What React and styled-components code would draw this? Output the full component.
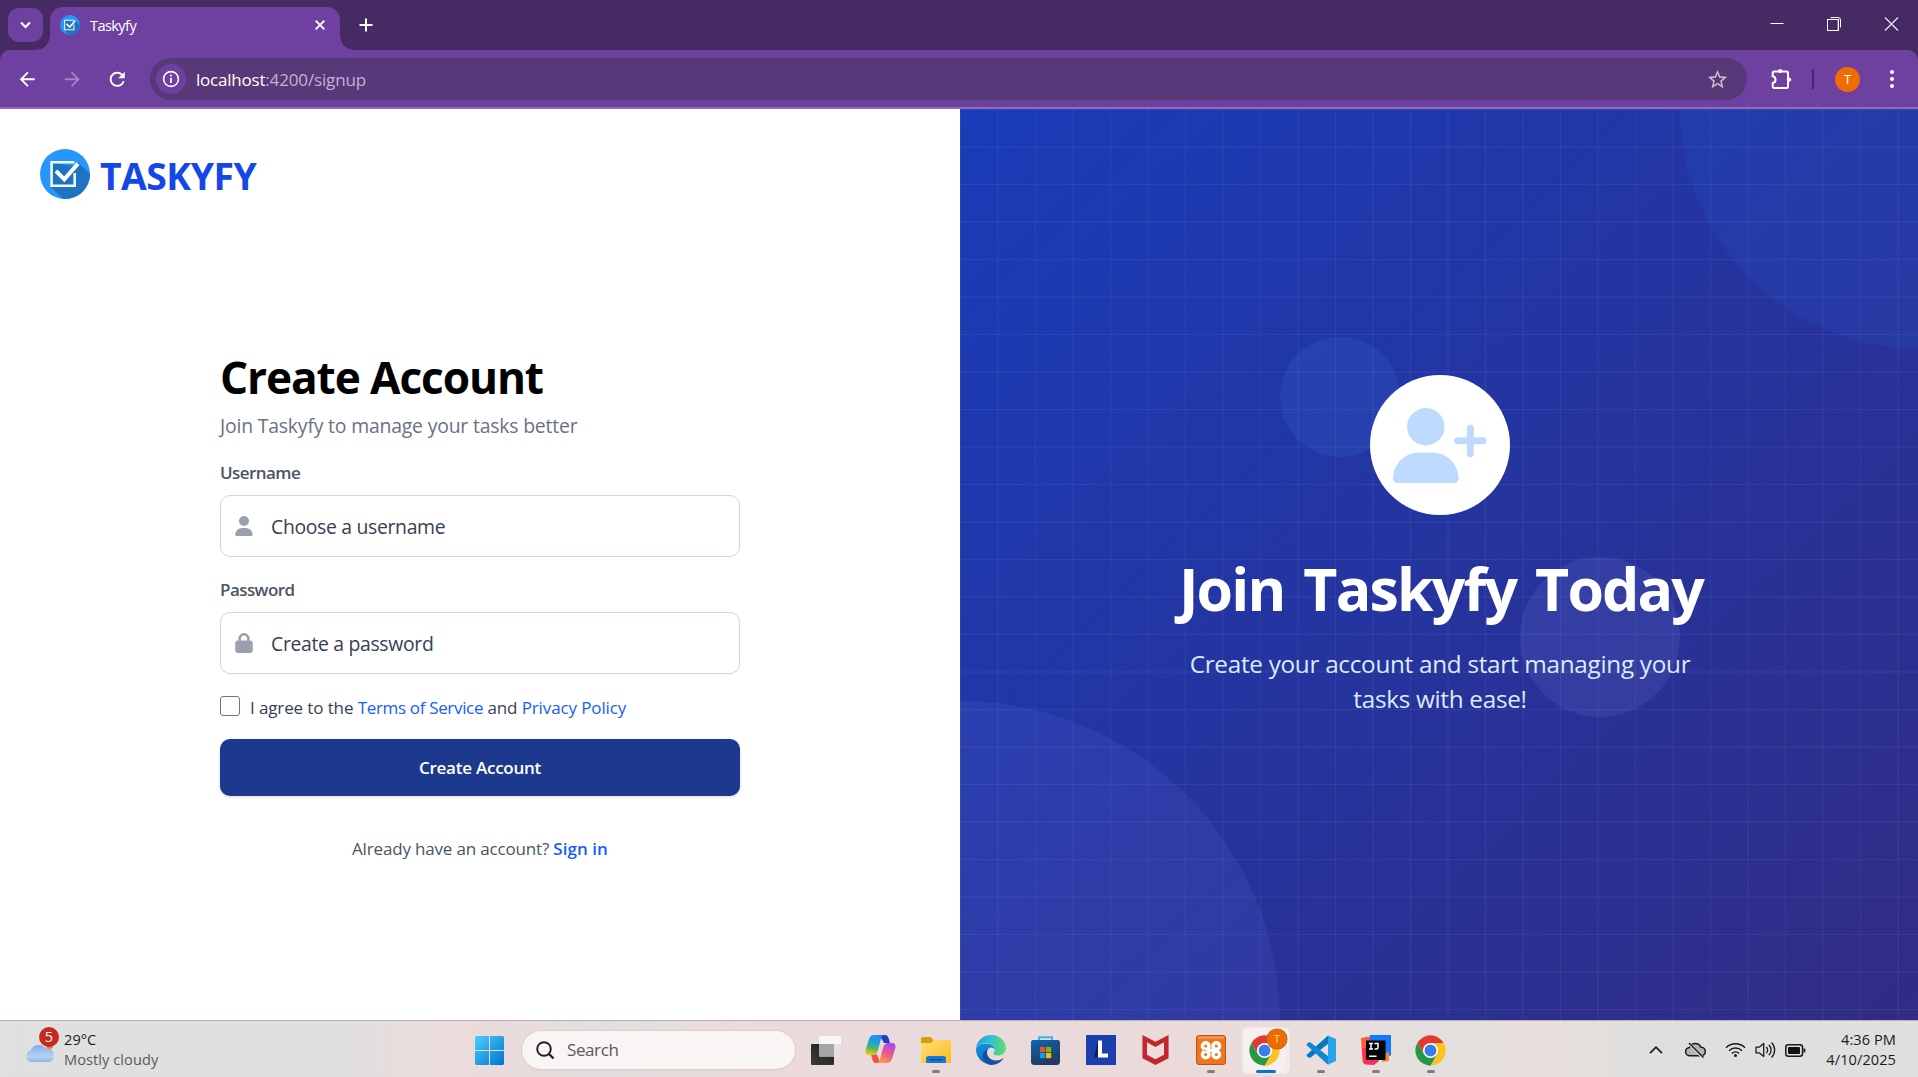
import React from 'react';
import styled, { createGlobalStyle } from 'styled-components';
import { FaUser, FaLock, FaUserPlus } from 'react-icons/fa6';
import { MdArrowBack, MdArrowForward, MdRefresh, MdStarBorder } from 'react-icons/md';

const GlobalStyle = createGlobalStyle`
  *, *::before, *::after { box-sizing: border-box; }
  body { margin: 0; background: #fff; overflow: hidden; }
  body, input, button { font-family: "Segoe UI", "Open Sans", "Noto Sans", sans-serif; }
  svg { display: block; flex: none; }
`;

const Screen = styled.div`
  display: flex;
  flex-direction: column;
  width: 1918px;
  height: 1077px;
  overflow: hidden;
`;

/* ---------- Browser window ---------- */

const TabStrip = styled.div`
  display: flex;
  align-items: flex-start;
  height: 50px;
  flex: none;
  padding-left: 8px;
  background: #462a64;
`;

const TabSearchButton = styled.button`
  display: grid;
  place-items: center;
  width: 35px;
  height: 34px;
  margin: 8px 7px 0 0;
  padding: 0;
  border: 0;
  border-radius: 11px;
  background: #6e41a1;
  color: #fff;
`;

const Tab = styled.div`
  position: relative;
  display: flex;
  align-items: center;
  width: 290px;
  height: 43px;
  margin-top: 7px;
  padding: 0 15px 7px 10px;
  border-radius: 13px 13px 0 0;
  background: #6e41a1;
  &::before, &::after {
    content: "";
    position: absolute;
    bottom: 0;
    width: 14px;
    height: 14px;
  }
  &::before { left: -14px; background: radial-gradient(circle at 0 0, transparent 13.5px, #6e41a1 14px); }
  &::after { right: -14px; background: radial-gradient(circle at 100% 0, transparent 13.5px, #6e41a1 14px); }
`;

const TabTitle = styled.span`
  flex: 1;
  margin-left: 10px;
  font-size: 14.6px;
  line-height: 22px;
  letter-spacing: -0.6px;
  color: #fff;
`;

const NewTabButton = styled.div`
  margin: 18px 0 0 19px;
  color: #fff;
`;

const WindowControls = styled.div`
  display: flex;
  align-items: center;
  gap: 43px;
  margin: 17px 19px 0 auto;
`;

const Toolbar = styled.div`
  display: flex;
  align-items: center;
  height: 59px;
  flex: none;
  padding: 1px 16px 0 16px;
  border-bottom: 2px solid #9569b9;
  background: #6e41a1;
  color: #fff;
`;

const ToolbarShell = styled.div`
  flex: none;
  background: #462a64;
  & > ${Toolbar} { border-radius: 10px 10px 0 0; }
`;

const NavIcons = styled.div`
  display: flex;
  align-items: center;
  gap: 22.5px;
  width: 134px;
  & > svg { width: 22.5px; height: 22.5px; }
`;

const DimForward = styled(MdArrowForward)`
  color: #a182c4;
`;

const Omnibox = styled.div`
  display: flex;
  align-items: center;
  width: 1597px;
  height: 42px;
  padding: 0 18px 0 6px;
  border-radius: 21px;
  background: #573879;
`;

const SiteInfo = styled.div`
  display: grid;
  place-items: center;
  width: 30px;
  height: 30px;
  border-radius: 50%;
  background: #6e41a1;
`;

const Url = styled.div`
  flex: 1;
  margin-left: 10px;
  padding-top: 1px;
  font-size: 17px;
  line-height: 24px;
  letter-spacing: -0.14px;
  color: #c3b1d6;
  & > b { font-weight: 400; letter-spacing: -0.22px; color: #fff; }
`;

const StarIcon = styled(MdStarBorder)`
  width: 23px;
  height: 23px;
  color: #c9c4c9;
`;

const ToolbarActions = styled.div`
  display: flex;
  align-items: center;
  flex: 1;
  padding-left: 23px;
`;

const Separator = styled.span`
  width: 2px;
  height: 20px;
  margin: 0 21px 0 19px;
  background: #472a65;
`;

const Avatar = styled.span`
  display: grid;
  place-items: center;
  width: 25px;
  height: 25px;
  margin-right: 29px;
  border-radius: 50%;
  background: #ef6c00;
  font-size: 13px;
  line-height: 25px;
  color: #fff;
`;

/* ---------- Sign-up page ---------- */

const Page = styled.main`
  display: flex;
  flex: none;
  height: 911px;
`;

const FormSide = styled.section`
  display: flex;
  flex-direction: column;
  width: 960px;
  background: #fff;
`;

const Brand = styled.div`
  display: flex;
  align-items: flex-start;
  gap: 10px;
  height: 91px;
  padding: 40px 0 0 40px;
`;

const BrandName = styled.span`
  padding-top: 2px;
  font-size: 37.3px;
  font-weight: 700;
  line-height: 50px;
  letter-spacing: -0.5px;
  color: #1447e6;
`;

const Form = styled.form`
  display: flex;
  flex-direction: column;
  width: 520px;
  margin: 152px auto 0;
`;

const Title = styled.h1`
  margin: 0 0 11px;
  font-size: 44.2px;
  font-weight: 700;
  line-height: 50px;
  letter-spacing: -1.1px;
  color: #000;
`;

const Subtitle = styled.p`
  margin: 0 0 24px;
  font-size: 19.4px;
  line-height: 25px;
  letter-spacing: -0.19px;
  color: #6a7282;
`;

const Label = styled.label`
  margin-bottom: 11px;
  font-size: 17px;
  font-weight: 600;
  line-height: 22px;
  letter-spacing: -0.57px;
  color: #4a5565;
`;

const Field = styled.div`
  display: flex;
  align-items: center;
  gap: 17px;
  height: 62px;
  margin-bottom: 22px;
  padding: 0 14px 0 13px;
  border: 1px solid #d1d5dc;
  border-radius: 10px;
  color: #99a1af;
  & > svg { width: 20px; height: 20px; }
`;

const Input = styled.input`
  flex: 1;
  height: 100%;
  padding: 0;
  border: 0;
  outline: 0;
  background: transparent;
  font-size: 19.4px;
  letter-spacing: -0.33px;
  &::placeholder { color: #364153; opacity: 1; }
`;

const Terms = styled.div`
  display: flex;
  align-items: flex-start;
  gap: 10px;
  height: 22px;
  margin-bottom: 21px;
  font-size: 17px;
  line-height: 23px;
  letter-spacing: -0.12px;
  color: #364153;
`;

const Checkbox = styled.input`
  appearance: none;
  width: 20px;
  height: 20px;
  margin: 0;
  border: 1px solid #767676;
  border-radius: 3px;
  background: #fff;
`;

const Link = styled.a`
  font-weight: ${(p) => (p.$strong ? 600 : 400)};
  letter-spacing: ${(p) => p.$spacing || 'inherit'};
  color: #155dfc;
`;

const SubmitButton = styled.button`
  height: 57px;
  padding: 0;
  border: 0;
  border-radius: 10px;
  background: #1c398e;
  box-shadow: 0 1px 3px rgba(0, 0, 0, 0.16);
  font-size: 17px;
  font-weight: 600;
  line-height: 58px;
  letter-spacing: -0.24px;
  color: #fff;
`;

const Footnote = styled.p`
  margin: 42px 0 0;
  text-align: center;
  font-size: 17px;
  line-height: 22px;
  letter-spacing: -0.17px;
  color: #4a5565;
`;

const Hero = styled.section`
  position: relative;
  display: flex;
  flex-direction: column;
  align-items: center;
  flex: 1;
  padding: 266px 0 0 2px;
  overflow: hidden;
  background: linear-gradient(to bottom right, #193cb8, #312c85);
`;

const Bubble = styled.span`
  position: absolute;
  left: ${(p) => p.$x}px;
  top: ${(p) => p.$y}px;
  width: ${(p) => p.$size}px;
  height: ${(p) => p.$size}px;
  border-radius: 50%;
  background: ${(p) => p.$color};
`;

const GridLines = styled.span`
  position: absolute;
  inset: 0;
  background-image:
    linear-gradient(to right, rgba(255, 255, 255, 0.055) 0 1px, transparent 1px 37px, rgba(255, 255, 255, 0.03) 37px 39px, transparent 39px),
    linear-gradient(to bottom, rgba(255, 255, 255, 0.055) 0 1px, transparent 1px 37px, rgba(255, 255, 255, 0.03) 37px 39px, transparent 39px);
  background-size: 75px 75px;
`;

const HeroBadge = styled.div`
  position: relative;
  display: grid;
  place-items: center;
  width: 140px;
  height: 140px;
  border-radius: 50%;
  background: #fff;
  color: #bedbff;
  & > svg { width: 93.75px; height: 75px; }
`;

const HeroTitle = styled.h2`
  position: relative;
  margin: 37px 0 0;
  padding-left: 2px;
  font-size: 59px;
  font-weight: 700;
  line-height: 72px;
  letter-spacing: -1.85px;
  word-spacing: 5.5px;
  white-space: nowrap;
  color: #fff;
`;

const HeroText = styled.p`
  position: relative;
  width: 520px;
  margin: 22px 0 0;
  text-align: center;
  font-size: 24.3px;
  line-height: 35px;
  letter-spacing: -0.29px;
  color: #dbeafe;
`;

/* ---------- Taskbar ---------- */

const Taskbar = styled.footer`
  display: flex;
  align-items: center;
  flex: 1;
  padding-top: 2px;
  border-top: 1px solid #b9b2b4;
  background: linear-gradient(to right, #e0e0e0 0, #e0dfdf 340px, #ecdcdc 450px, #e9dbdb 510px, #e1dedd 590px, #ebdadb 760px, #ebdada 1180px, #e9dfdc 1330px, #e2dfde 1440px, #e9e0dc 1540px, #dfdfdf 1640px, #dfdfdf 100%);
`;

const Weather = styled.div`
  display: flex;
  align-items: center;
  width: 461.5px;
  height: 100%;
  padding-left: 25px;
`;

const WeatherIcon = styled.div`
  position: relative;
  width: 30px;
  height: 20px;
  margin: 6px 9px 0 0;
`;

const AlertBadge = styled.span`
  position: absolute;
  left: 14px;
  top: -16px;
  width: 20px;
  height: 20px;
  border-radius: 50%;
  background: #c42b1c;
  text-align: center;
  font-size: 14.5px;
  line-height: 20px;
  color: #fff;
`;

const TwoLines = styled.div`
  margin-top: -2px;
  font-size: 14.6px;
  line-height: 20px;
  letter-spacing: 0.06px;
  text-align: ${(p) => p.$align || 'left'};
  color: #1b1b1b;
`;

const Muted = styled.div`
  color: #5b5b5b;
`;

const TaskItem = styled.div`
  position: relative;
  display: flex;
  align-items: center;
  justify-content: center;
  width: 55px;
  height: 100%;
  padding-bottom: ${(p) => p.$lift || 0}px;
  &::after {
    content: "";
    display: ${(p) => (p.$state ? 'block' : 'none')};
    position: absolute;
    bottom: 4px;
    left: 50%;
    width: ${(p) => (p.$state === 'active' ? 20 : 8)}px;
    height: 3px;
    border-radius: 2px;
    transform: translateX(-50%);
    background: ${(p) => (p.$state === 'active' ? '#0a72cf' : '#857b7c')};
  }
`;

const ActiveTile = styled.div`
  display: grid;
  place-items: center;
  width: 48px;
  height: 47px;
  border: 1px solid #f1e7e7;
  border-right: 4px double #eee3e3;
  border-radius: 6px;
  background: #f6efef;
`;

const ProfileBadge = styled.span`
  position: absolute;
  left: 29px;
  top: 6px;
  width: 20px;
  height: 20px;
  border-radius: 50%;
  background: #ee6b02;
  box-shadow: 0 0 0 0.5px #a55a20;
  text-align: center;
  font-size: 11px;
  line-height: 20px;
  color: #f7d0b0;
`;

const SearchPill = styled.div`
  display: flex;
  align-items: center;
  gap: 12px;
  width: 273px;
  height: 38.5px;
  margin: 0 3px 0 5.5px;
  padding-left: 14px;
  border-radius: 20px;
  background: #f8f5f4;
  box-shadow: 0 0 0 1px #ddcfcf, 0 1px 1px #bdb0b0;
  font-size: 17px;
  line-height: 24px;
  letter-spacing: -0.4px;
  color: #5c5a5a;
`;

const Tray = styled.div`
  display: flex;
  align-items: center;
  margin-left: auto;
  padding-right: 22px;
`;

const TrayGap = styled.span`
  width: ${(p) => p.$w}px;
`;

/* ---------- Drawings ---------- */

const TaskyfyLogo = ({ size, id }) => (
  <svg width={size} height={size} viewBox="0 0 50 50">
    <clipPath id={id}><circle cx="25" cy="25" r="25" /></clipPath>
    <g clipPath={`url(#${id})`}>
      <rect width="50" height="50" fill="#2897fb" />
      <path d="M10.5 37.5L24 51H51V26L38.5 13.5L34 17L12 14Z" fill="#1f74c1" />
      <path d="M34.5 13.3H11.6V36.7H34.7V24" fill="none" stroke="#f3f8fd" strokeWidth="2.6" />
      <path d="M16 22L24.3 30.3L38 14.6" fill="none" stroke="#fff" strokeWidth="4" />
    </g>
  </svg>
);

const ChromeLogo = () => (
  <svg width="31" height="31" viewBox="1.5 1.5 45 45">
    <path d="M4.95 13A22 22 0 0 1 43.05 13H24L14.47 29.5Z" fill="#de3b2e" />
    <path d="M43.05 13A22 22 0 0 1 24 46L33.53 29.5L24 13Z" fill="#fcc31e" />
    <path d="M24 46A22 22 0 0 1 4.95 13L14.47 29.5H33.53Z" fill="#279847" />
    <circle cx="24" cy="24" r="11" fill="#fff" />
    <circle cx="24" cy="24" r="8.6" fill="#3a7de8" />
  </svg>
);

const WindowsLogo = () => (
  <svg width="29" height="29" viewBox="0 0 29 29">
    <linearGradient id="win" x1="0" y1="0" x2="1" y2="1">
      <stop offset="0" stopColor="#4bd0fb" /><stop offset="1" stopColor="#0071d2" />
    </linearGradient>
    <path d="M1 0H14V14H0V1ZM15 0H28L29 1V14H15ZM0 15H14V29H1L0 28ZM15 15H29V28L28 29H15Z" fill="url(#win)" />
  </svg>
);

const TaskViewIcon = () => (
  <svg width="30" height="29" viewBox="0 0 30 29">
    <linearGradient id="tvd" x1="0" y1="1" x2="1" y2="0"><stop offset="0" stopColor="#3a3d3a" /><stop offset="1" stopColor="#1b1c1b" /></linearGradient>
    <rect x="0" y="8" width="23" height="21" rx="1" fill="url(#tvd)" />
    <rect x="8" y="0" width="22" height="20.5" rx="1" fill="#f7f7f7" />
    <rect x="8" y="8" width="15" height="12.5" fill="#a4a5a4" />
    <rect x="23" y="8" width="7" height="12.5" fill="#e3e1e1" />
  </svg>
);

const CopilotIcon = () => (
  <svg width="31" height="28" viewBox="0 0 31 28">
    <defs>
      <linearGradient id="cp1" x1="0.4" y1="0" x2="0.2" y2="1">
        <stop offset="0" stopColor="#1f8df2" /><stop offset="0.35" stopColor="#19a3d8" /><stop offset="0.65" stopColor="#54b85b" /><stop offset="1" stopColor="#f2d010" />
      </linearGradient>
      <linearGradient id="cp2" x1="0.7" y1="0" x2="0.3" y2="1">
        <stop offset="0" stopColor="#a54df0" /><stop offset="0.5" stopColor="#ee5791" /><stop offset="1" stopColor="#fb9a4a" />
      </linearGradient>
    </defs>
    <path d="M15 0H20C22 0 23 1.5 23.5 3L25 8H19L15 1Z" fill="#1b3fc9" />
    <path d="M16 28H11C9 28 8 26.5 7.5 25L6 19.5H12L15 27Z" fill="#f0543c" />
    <path d="M9 0H19C17.5 0 16.6 2 16 4L13 15C12 18.5 10.5 20 7.5 20H3.5C1 20 0 18 .7 15L4 4C5 1.2 6.5 0 9 0Z" fill="url(#cp1)" />
    <path d="M22 28H12C13.5 28 14.4 26 15 24L18 13C19 9.5 20.5 8 23.5 8H27.5C30 8 31 10 30.3 13L27 24C26 26.8 24.5 28 22 28Z" fill="url(#cp2)" />
  </svg>
);

const ExplorerIcon = () => (
  <svg width="30" height="27" viewBox="0 0 30 27">
    <linearGradient id="fe" x1="0" y1="0" x2="1" y2="1"><stop offset="0" stopColor="#ffe07a" /><stop offset="1" stopColor="#fcbb1c" /></linearGradient>
    <path d="M0 1.5A1.5 1.5 0 0 1 1.5 0H9.5L12.5 3V8H0Z" fill="#dc9c07" />
    <path d="M0 6H10L13 3H29A1 1 0 0 1 30 4V26H0Z" fill="url(#fe)" />
    <path d="M5 26V21.5A2.5 2.5 0 0 1 7.5 19H22.5A2.5 2.5 0 0 1 25 21.5V26Z" fill="#1379d3" />
    <rect x="8.5" y="22" width="13" height="1.3" fill="#0a4b93" />
  </svg>
);

const EdgeIcon = () => (
  <svg width="30" height="30" viewBox="0 0 30 30">
    <defs>
      <linearGradient id="eg1" x1="0" y1="0.3" x2="1" y2="0.4"><stop offset="0" stopColor="#1f9ede" /><stop offset="0.5" stopColor="#33c2d0" /><stop offset="1" stopColor="#62dd6a" /></linearGradient>
      <linearGradient id="eg2" x1="0" y1="0" x2="0.4" y2="1"><stop offset="0" stopColor="#1295dd" /><stop offset="1" stopColor="#0a6bc4" /></linearGradient>
    </defs>
    <path d="M0 14A15 15 0 0 1 15 0C24 0 30 6.5 30 13C30 18 26 20.5 22 20.5C19 20.5 17.5 19.5 17.5 18.5C17.5 17.5 18.7 17 18.7 14.5C18.7 11 14 8 9.5 8C5 8 1.5 10.5 0 14Z" fill="url(#eg1)" />
    <path d="M0 14C1.5 10.5 5 8.5 9.5 8.5C15 8.5 18.7 11.5 18.7 14.5C16.5 11 11.5 12 11 17C10.5 23 16 27 20 28.5A15 15 0 0 1 0 14Z" fill="url(#eg2)" />
    <path d="M11.5 14.5C9.5 20 13.5 25.5 20 25.5C23.5 25.5 26 24 27.5 23C25.5 27 21 30 15 30C9 29 6.5 24 6.5 20.5C6.5 17.5 8.5 15.5 11.5 14.5Z" fill="#14509b" />
  </svg>
);

const StoreIcon = () => (
  <svg width="29" height="29" viewBox="0 0 29 29">
    <linearGradient id="st" x1="0" y1="0" x2="0.4" y2="1"><stop offset="0" stopColor="#0d66b6" /><stop offset="1" stopColor="#223a5e" /></linearGradient>
    <path d="M8 5V1.2H21V5" fill="none" stroke="#37b5ee" strokeWidth="2" />
    <path d="M1.5 4H27.5L29 5.5V25.5A3.5 3.5 0 0 1 25.5 29H3.5A3.5 3.5 0 0 1 0 25.5V5.5Z" fill="url(#st)" />
    <rect x="9" y="11" width="5.2" height="5.2" fill="#f25022" /><rect x="15" y="11" width="5.2" height="5.2" fill="#7fba00" />
    <rect x="9" y="17" width="5.2" height="5.2" fill="#00a4ef" /><rect x="15" y="17" width="5.2" height="5.2" fill="#ffb900" />
  </svg>
);

const LIcon = () => (
  <svg width="30" height="30" viewBox="0 0 30 30">
    <rect width="30" height="30" fill="#1d3fae" />
    <path d="M12 5.5L8 22.5H13Z" fill="#0c2347" />
    <path d="M12 5.5H16V18.5H22V22.5H12Z" fill="#fff" />
  </svg>
);

const ShieldIcon = () => (
  <svg width="27" height="30" viewBox="0 0 27 31">
    <path d="M0 0L13.5 7L27 0V24L13.5 31L0 24Z" fill="#c0282d" />
    <path d="M4.7 7.5L13.5 12.5L22.3 7.5V20.5L13.5 25L4.7 20.5Z" fill="#efdcdc" />
  </svg>
);

const XamppIcon = () => (
  <svg width="30" height="30" viewBox="0 0 30 30">
    <rect x="0.5" y="0.5" width="29" height="29" rx="2.5" fill="#ef7420" stroke="#b4561a" />
    <rect x="2" y="1.5" width="26" height="2" fill="#f59c5e" />
    <g fill="none" stroke="#fff" strokeWidth="3.4" strokeLinecap="round">
      <circle cx="9.7" cy="11" r="3.3" /><circle cx="20.3" cy="11" r="3.3" />
      <circle cx="9.7" cy="19.500" r="3.3" /><circle cx="20.3" cy="19.5" r="3.3" />
      <path d="M12 15.2H18" strokeWidth="3.6" />
    </g>
    <path d="M8 14.600L11 15.3L8 16Z" fill="#ef7420" />
  </svg>
);

const VsCodeIcon = () => (
  <svg width="30" height="30" viewBox="0 0 30 30">
    <path d="M22 0.5L1.2 19.3Q0 20.3 1 21.3L2.7 22.6Q3.6 23.2 4.6 22.5L22.5 8.5Z" fill="#0b76bd" />
    <path d="M22 29.7L1.2 10.7Q0 9.7 1 8.7L2.7 7.4Q3.6 6.8 4.6 7.5L22.5 21.5Z" fill="#1287d4" />
    <path d="M22 0.5L29 3.5A1.5 1.5 0 0 1 30 5V25A1.5 1.5 0 0 1 29 26.5L22 29.7Z" fill="#2ba4ea" />
  </svg>
);

const IntelliJIcon = () => (
  <svg width="30" height="30" viewBox="0 0 30 30">
    <path d="M0 3L8 1.5L14 12L10 29.5H4L1.5 27Z" fill="#fc5f32" />
    <path d="M1 14L10 10L18 26L13 30L3 29Z" fill="#fc2a62" />
    <path d="M9 0H30V20L22 26L8 8Z" fill="#1479fb" />
    <path d="M22 20L28 17V26L21 27Z" fill="#f7872a" />
    <rect x="5" y="5.5" width="19.5" height="19.5" fill="#000" />
    <path d="M8 8.5H12M10 8.5V14M8 14H12M13.5 8.5H17V12.5Q17 14 15.5 14H13.5" fill="none" stroke="#fff" strokeWidth="1.5" />
    <rect x="8" y="20.5" width="7.5" height="1.5" fill="#fff" />
  </svg>
);

const WeatherCloud = () => (
  <svg width="30" height="20" viewBox="0 0 30 20">
    <linearGradient id="wc" x1="0" y1="0" x2="0" y2="1"><stop offset="0" stopColor="#85adec" /><stop offset="0.7" stopColor="#b9d1f8" /><stop offset="1" stopColor="#8fb1ee" /></linearGradient>
    <circle cx="24.5" cy="2.5" r="3.5" fill="#ef8015" />
    <path d="M6 19A6 6 0 0 1 5.5 7.5A9 9 0 0 1 21 5.5A6.8 6.8 0 0 1 23.5 19Z" fill="url(#wc)" />
  </svg>
);

/* ---------- Sections ---------- */

const Browser = () => (
  <>
    <TabStrip>
      <TabSearchButton type="button">
        <svg width="11" height="8" viewBox="0 0 11 8"><path d="M1 1.5L5.5 6L10 1.5" fill="none" stroke="currentColor" strokeWidth="2.1" /></svg>
      </TabSearchButton>
      <Tab>
        <TaskyfyLogo size={20} id="logo-tab" />
        <TabTitle>Taskyfy</TabTitle>
        <svg width="10" height="10" viewBox="0 0 10 10"><path d="M0.7 0.7L9.3 9.3M9.3 0.7L0.7 9.3" stroke="#fff" strokeWidth="1.9" /></svg>
      </Tab>
      <NewTabButton>
        <svg width="14" height="14" viewBox="0 0 14 14"><path d="M7 0.5V13.5M0.5 7H13.5" stroke="currentColor" strokeWidth="2" /></svg>
      </NewTabButton>
      <WindowControls>
        <svg width="14" height="14" viewBox="0 0 14 14"><path d="M0.5 6.5H13.5" stroke="#fff" /></svg>
        <svg width="14" height="14" viewBox="0 0 14 14">
          <path d="M3.5 0.5H11A2.5 2.5 0 0 1 13.5 3V10.5" fill="none" stroke="#fff" />
          <path d="M11 2.5V13" stroke="#9b86ad" strokeWidth="1.5" />
          <rect x="0.5" y="2.5" width="11" height="11" fill="none" stroke="#fff" />
        </svg>
        <svg width="15" height="14" viewBox="0 0 15 14"><path d="M1 0.5L14 13.5M14 0.5L1 13.5" stroke="#f2eef5" strokeWidth="1.1" /></svg>
      </WindowControls>
    </TabStrip>
    <ToolbarShell>
      <Toolbar>
        <NavIcons>
          <MdArrowBack />
          <DimForward />
          <MdRefresh />
        </NavIcons>
        <Omnibox>
          <SiteInfo>
            <svg width="18" height="18" viewBox="0 0 18 18">
              <circle cx="9" cy="9" r="7.4" fill="none" stroke="#fff" strokeWidth="1.6" />
              <path d="M9 7.8V13" stroke="#fff" strokeWidth="1.7" /><circle cx="9" cy="5.5" r="1" fill="#fff" />
            </svg>
          </SiteInfo>
          <Url><b>localhost</b>:4200/signup</Url>
          <StarIcon />
        </Omnibox>
        <ToolbarActions>
          <svg width="23" height="22" viewBox="0 0 23 22">
            <path d="M4.2 3.5H16.5A1.5 1.5 0 0 1 18 5V18.5A1.5 1.5 0 0 1 16.5 20H4.2A1.5 1.5 0 0 1 2.7 18.5V15A3.4 3.4 0 0 0 2.7 8.3V5A1.5 1.5 0 0 1 4.2 3.5Z" fill="none" stroke="#fff" strokeWidth="2" />
            <circle cx="10.2" cy="3" r="2.1" fill="#fff" /><circle cx="19" cy="11.6" r="2.2" fill="#fff" />
          </svg>
          <Separator />
          <Avatar>T</Avatar>
          <svg width="6" height="20" viewBox="0 0 6 20" fill="#fff"><circle cx="3" cy="3" r="2" /><circle cx="3" cy="10" r="2" /><circle cx="3" cy="17" r="2" /></svg>
        </ToolbarActions>
      </Toolbar>
    </ToolbarShell>
  </>
);

const SignUp = () => (
  <Page>
    <FormSide>
      <Brand>
        <TaskyfyLogo size={50} id="logo-page" />
        <BrandName>TASKYFY</BrandName>
      </Brand>
      <Form>
        <Title>Create Account</Title>
        <Subtitle>Join Taskyfy to manage your tasks better</Subtitle>
        <Label htmlFor="username">Username</Label>
        <Field><FaUser /><Input id="username" placeholder="Choose a username" /></Field>
        <Label htmlFor="password">Password</Label>
        <Field><FaLock /><Input id="password" type="password" placeholder="Create a password" /></Field>
        <Terms>
          <Checkbox type="checkbox" />
          <span>I agree to the <Link $spacing="-0.33px">Terms of Service</Link> and <Link>Privacy Policy</Link></span>
        </Terms>
        <SubmitButton type="button">Create Account</SubmitButton>
        <Footnote>Already have an account? <Link $strong $spacing="0.05px">Sign in</Link></Footnote>
      </Form>
    </FormSide>
    <Hero>
      <Bubble $x={720} $y={-240} $size={480} $color="rgba(43, 127, 255, 0.1)" />
      <Bubble $x={-320} $y={592} $size={640} $color="rgba(124, 134, 255, 0.1)" />
      <Bubble $x={320} $y={228} $size={120} $color="rgba(81, 162, 255, 0.1)" />
      <Bubble $x={560} $y={448} $size={160} $color="rgba(163, 179, 255, 0.1)" />
      <GridLines />
      <HeroBadge><FaUserPlus /></HeroBadge>
      <HeroTitle>Join Taskyfy Today</HeroTitle>
      <HeroText>Create your account and start managing your tasks with ease!</HeroText>
    </Hero>
  </Page>
);

const SystemBar = () => (
  <Taskbar>
    <Weather>
      <WeatherIcon><WeatherCloud /><AlertBadge>5</AlertBadge></WeatherIcon>
      <TwoLines>29°C<Muted>Mostly cloudy</Muted></TwoLines>
    </Weather>
    <TaskItem><WindowsLogo /></TaskItem>
    <SearchPill>
      <svg width="19" height="19" viewBox="0 0 19 19"><circle cx="8" cy="8" r="6.8" fill="none" stroke="#222" strokeWidth="1.9" /><path d="M13 13L17.5 17.5" stroke="#222" strokeWidth="2.4" /></svg>
      <span>Search</span>
    </SearchPill>
    <TaskItem><TaskViewIcon /></TaskItem>
    <TaskItem $lift={2}><CopilotIcon /></TaskItem>
    <TaskItem $state="open"><ExplorerIcon /></TaskItem>
    <TaskItem><EdgeIcon /></TaskItem>
    <TaskItem><StoreIcon /></TaskItem>
    <TaskItem><LIcon /></TaskItem>
    <TaskItem><ShieldIcon /></TaskItem>
    <TaskItem $state="open"><XamppIcon /></TaskItem>
    <TaskItem $state="active"><ActiveTile><ChromeLogo /></ActiveTile><ProfileBadge>T</ProfileBadge></TaskItem>
    <TaskItem $state="open"><VsCodeIcon /></TaskItem>
    <TaskItem $state="open"><IntelliJIcon /></TaskItem>
    <TaskItem $state="open"><ChromeLogo /></TaskItem>
    <Tray>
      <svg width="14" height="8" viewBox="0 0 14 8"><path d="M1 7.2L7 1.2L13 7.2" fill="none" stroke="#1a1a1a" strokeWidth="1.7" /></svg>
      <TrayGap $w={22} />
      <svg width="21" height="17" viewBox="0 0 21 17">
        <path d="M5 13.8A4.2 4.2 0 0 1 4.6 5.4A6 6 0 0 1 15.8 5.2A4.3 4.3 0 0 1 16.2 13.8Z" fill="#b5b5b5" stroke="#1a1a1a" strokeWidth="1.5" />
        <path d="M4.5 2L18.5 16" stroke="#dfdfdf" strokeWidth="3" /><path d="M4 1L18.5 15.5" stroke="#1a1a1a" strokeWidth="1.5" />
      </svg>
      <TrayGap $w={19} />
      <svg width="21" height="16" viewBox="0 0 21 16" fill="none" stroke="#1a1a1a" strokeWidth="1.4">
        <path d="M1 5.7A13.5 13.5 0 0 1 20 5.7" /><path d="M4 8.7A9.2 9.2 0 0 1 17 8.7" /><path d="M6.9 11.5A5.2 5.2 0 0 1 14.1 11.5" /><circle cx="10.5" cy="13.6" r="1.5" fill="#1a1a1a" stroke="none" />
      </svg>
      <TrayGap $w={9} />
      <svg width="21" height="18" viewBox="0 0 21 18" fill="none" stroke="#1a1a1a" strokeWidth="1.3">
        <path d="M1 6.2H4.2L8.7 2.5V15.5L4.2 11.8H1Z" strokeLinejoin="round" /><path d="M11.3 6A4 4 0 0 1 11.3 12" /><path d="M13.8 3.8A7 7 0 0 1 13.8 14.2" /><path d="M16.5 1.5A10.5 10.5 0 0 1 16.5 16.5" />
      </svg>
      <TrayGap $w={9} />
      <svg width="21" height="13" viewBox="0 0 21 13">
        <rect x="0.8" y="0.8" width="16.7" height="11.4" rx="2.5" fill="none" stroke="#1a1a1a" strokeWidth="1.5" /><rect x="3" y="3" width="12" height="7" rx="1" fill="#111" /><path d="M18.5 4.5H19.5A1 1 0 0 1 20.3 5.3V7.7A1 1 0 0 1 19.5 8.5H18.5Z" fill="#1a1a1a" />
      </svg>
      <TrayGap $w={20} />
      <TwoLines $align="right">4:36 PM<div>4/10/2025</div></TwoLines>
    </Tray>
  </Taskbar>
);

export default function App() {
  return (
    <Screen>
      <GlobalStyle />
      <Browser />
      <SignUp />
      <SystemBar />
    </Screen>
  );
}
